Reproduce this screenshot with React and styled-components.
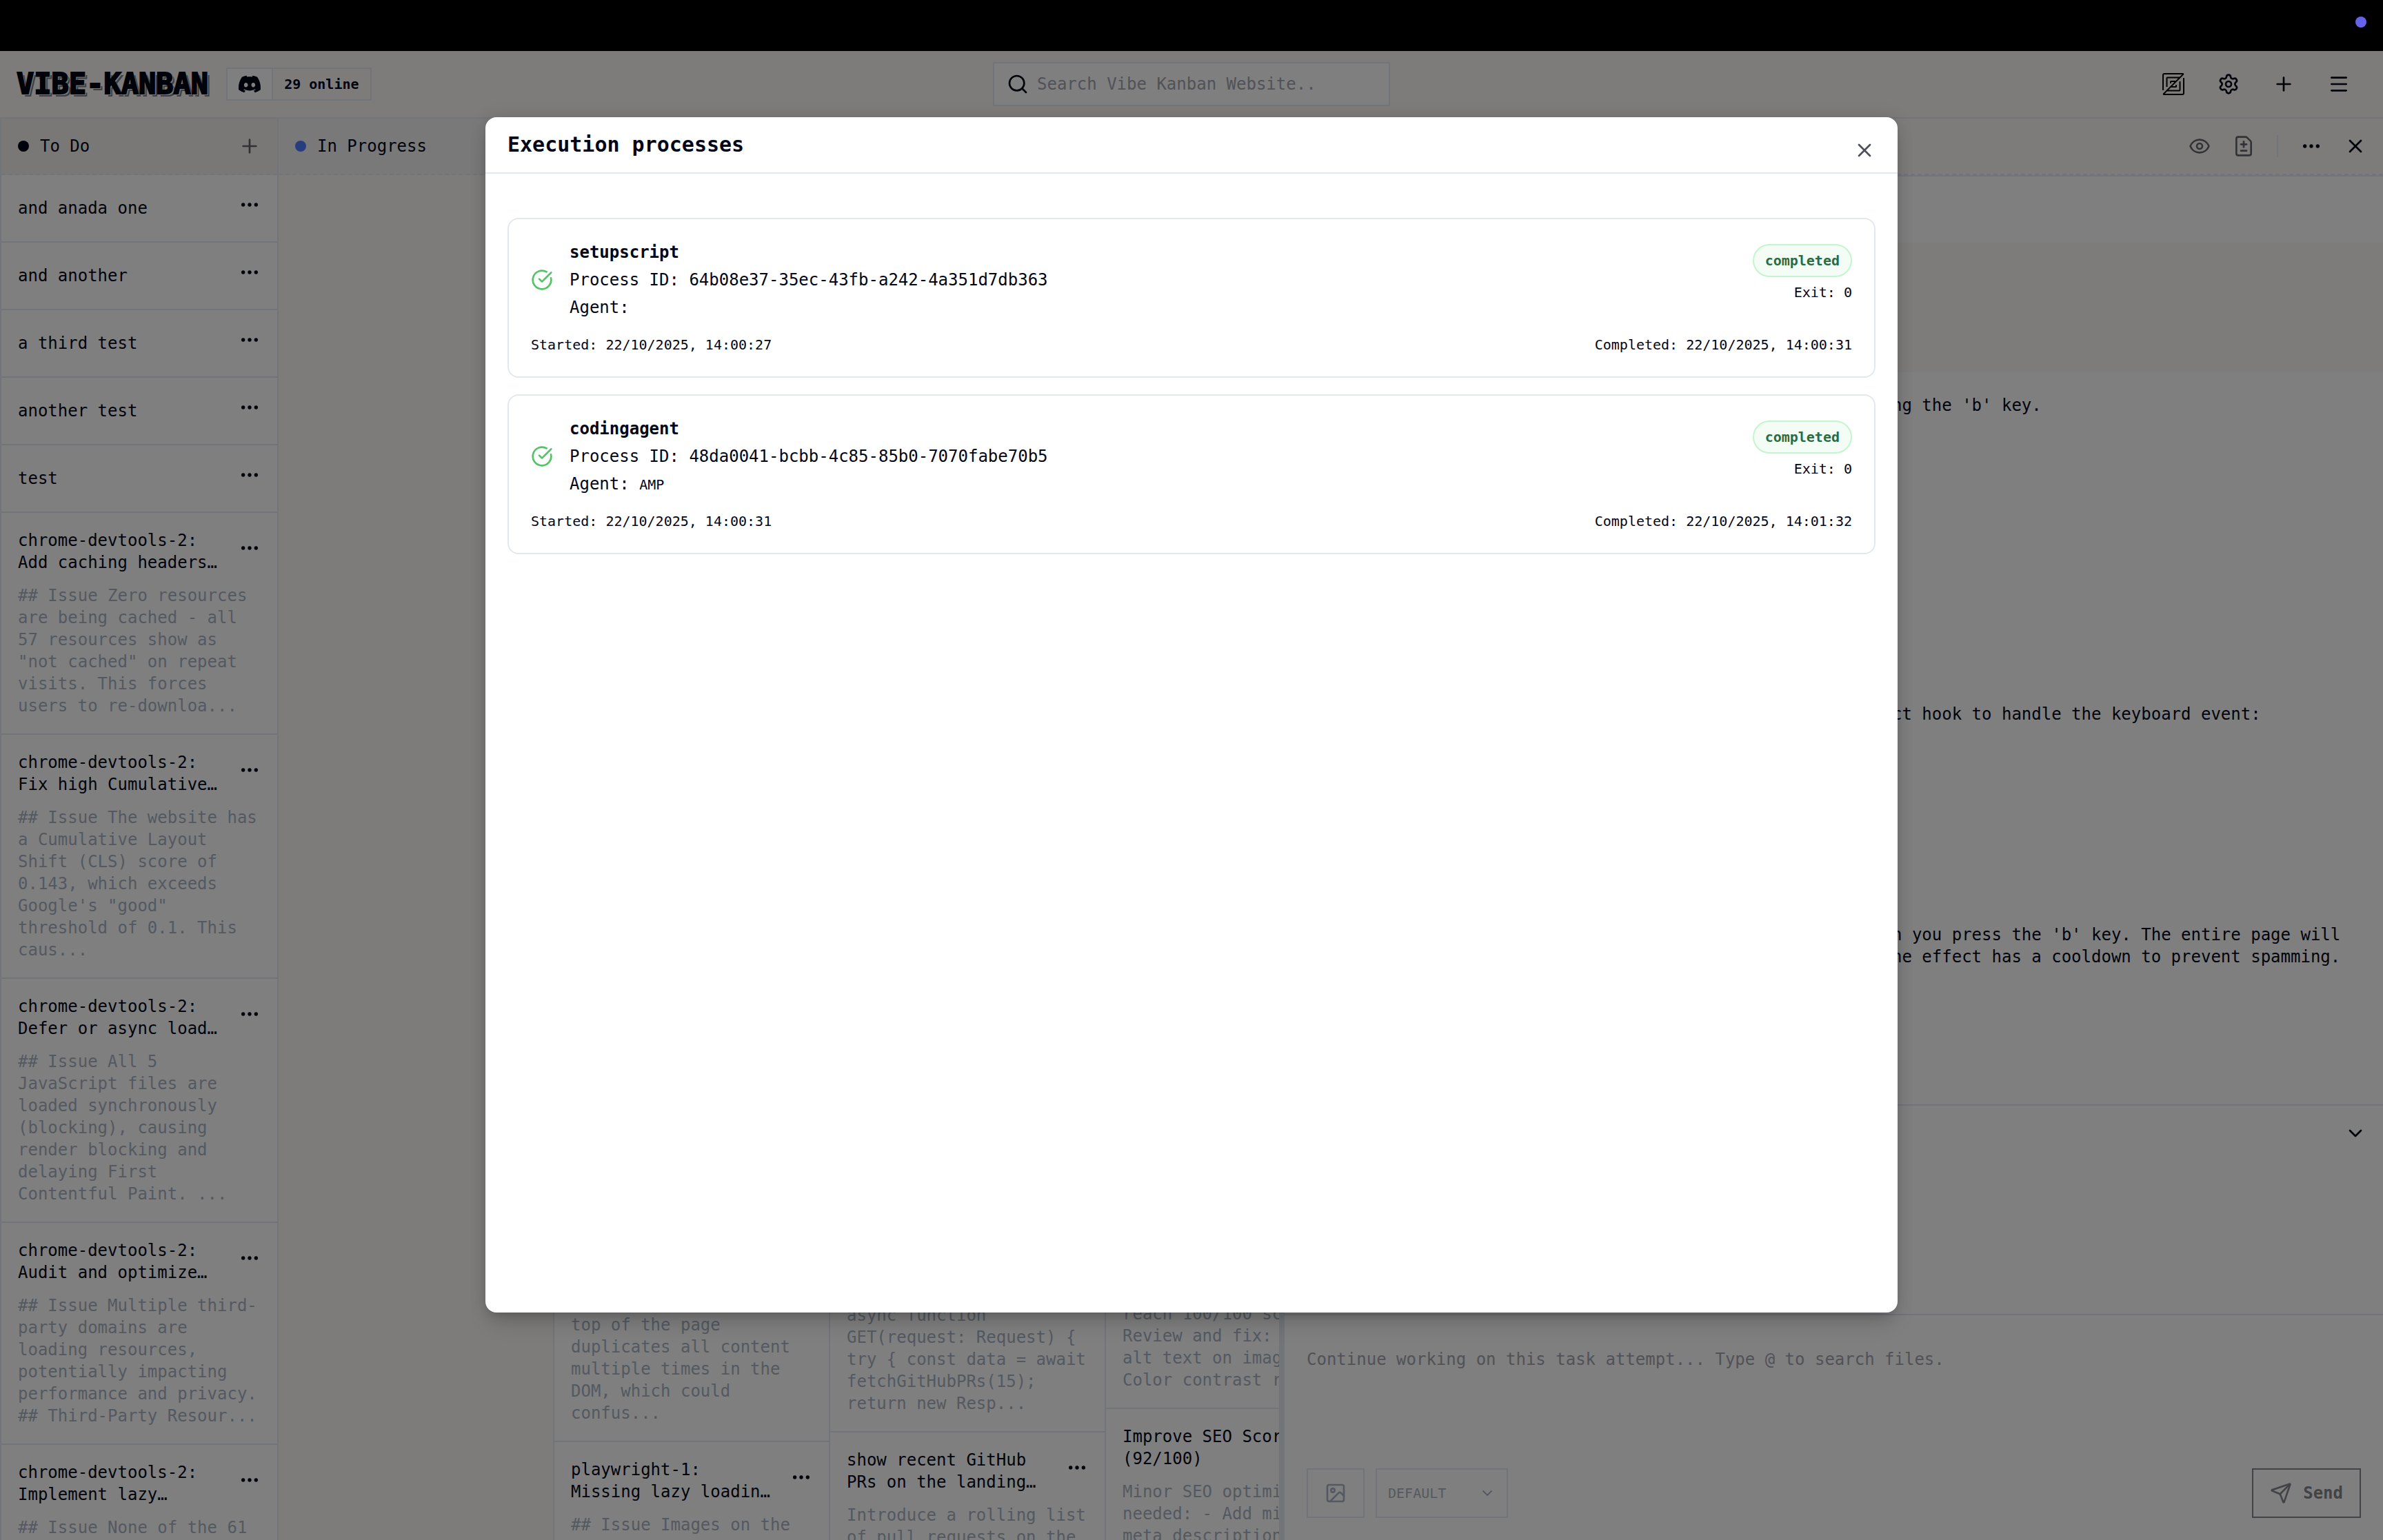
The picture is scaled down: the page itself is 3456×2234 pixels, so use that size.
import React from 'react';
import styled, { createGlobalStyle } from 'styled-components';
import {
  ChevronDown,
  CircleCheckBig,
  Eye,
  FileDiff,
  Image as ImageIcon,
  Menu,
  MoreHorizontal,
  Plus,
  Search,
  Send,
  Settings,
  X,
} from 'lucide-react';
import { SiDiscord } from 'react-icons/si';

const color = {
  ink: '#020617',
  line: '#e2e8f0',
  sand: '#fcf9f4',
  muted: '#a9b3c2',
  hint: '#a3a4b0',
};

const GlobalStyle = createGlobalStyle`
  *, *::before, *::after { box-sizing: border-box; }
  body {
    margin: 0;
    background: #000;
    color: ${color.ink};
    font-family: "DejaVu Sans Mono", "Liberation Mono", monospace;
    font-size: 24px;
    line-height: 32px;
  }
  h1, h2, h3, p, ul { margin: 0; padding: 0; font: inherit; }
  ul { list-style: none; }
  button, input, select, textarea { font: inherit; color: inherit; }
`;

const Page = styled.div`
  display: flex;
  flex-direction: column;
  height: 100vh;
`;

const SystemBar = styled.div`
  display: flex;
  flex: none;
  justify-content: flex-end;
  height: 74px;
  padding: 24px;
  background: #000;
`;

const Dot = styled.span`
  flex: none;
  width: 16px;
  height: 16px;
  border-radius: 50%;
  background: ${(p) => p.$color};
`;

const Shell = styled.div`
  position: relative;
  display: flex;
  flex: 1;
  flex-direction: column;
  min-height: 0;
  background: #fff;
`;

const IconButton = styled.button`
  display: grid;
  flex: none;
  place-items: center;
  width: ${(p) => p.$width || 32}px;
  height: 32px;
  padding: 0;
  border: 0;
  background: none;
  opacity: ${(p) => (p.$faded ? 0.6 : 1)};
`;

/* Top navigation */

const NavBar = styled.header`
  display: grid;
  flex: none;
  grid-template-columns: 1fr auto 1fr;
  align-items: center;
  height: 98px;
  padding: 0 24px;
  border-bottom: 2px solid ${color.line};
  background: ${color.sand};
`;

const Brand = styled.div`
  display: flex;
  align-items: center;
  gap: 26px;
`;

const Wordmark = styled.h1`
  font-size: 42px;
  font-weight: 700;
  line-height: 48px;
  -webkit-text-stroke: 2px ${color.ink};
  text-shadow: 2px 2px 0 ${color.sand}, 4px 4px 0 #7c7d86;
`;

const OnlineLink = styled.a`
  display: flex;
  align-items: center;
  height: 48px;
  border: 2px solid ${color.line};
  color: inherit;
  font-size: 20px;
  font-weight: 700;
  line-height: 28px;
  text-decoration: none;
`;

const OnlineIcon = styled.span`
  display: grid;
  place-items: center;
  width: 66px;
  height: 100%;
  border-right: 2px solid ${color.line};
  background: #fff;
`;

const OnlineText = styled.span`
  padding: 0 16px;
`;

const SearchBox = styled.label`
  display: flex;
  align-items: center;
  gap: 12px;
  width: 576px;
  height: 64px;
  padding: 0 110px 0 18px;
  border: 2px solid ${color.line};
  background: #fff;
`;

const SearchInput = styled.input`
  flex: 1;
  min-width: 0;
  padding: 0;
  border: 0;
  outline: 0;
  background: none;
  &::placeholder { color: ${color.hint}; opacity: 1; }
`;

const NavActions = styled.nav`
  display: flex;
  justify-content: flex-end;
`;

/* Board */

const Workspace = styled.div`
  display: grid;
  flex: 1;
  grid-template-columns: minmax(0, 538fr) 8px minmax(0, 462fr);
  min-height: 0;
`;

const Board = styled.main`
  display: flex;
  overflow: hidden;
  border-left: 2px solid ${color.line};
  background: ${color.sand};
`;

const Column = styled.section`
  display: flex;
  flex: none;
  flex-direction: column;
  width: ${(p) => (p.$first ? 402 : 400)}px;
  border-right: 2px solid ${color.line};
`;

const ColumnHeader = styled.div`
  display: flex;
  flex: none;
  align-items: center;
  gap: 16px;
  height: 82px;
  padding: 0 24px;
  border-bottom: 2px dashed ${color.line};
  background: ${(p) => p.$tint};
`;

const ColumnName = styled.h2`
  flex: 1;
`;

const CardList = styled.ul`
  display: flex;
  flex: 1;
  flex-direction: column;
  min-height: 0;
`;

const Card = styled.li`
  display: flex;
  flex: none;
  flex-direction: column;
  gap: 16px;
  min-height: ${(p) => p.$height || 98}px;
  padding: 24px;
  border-bottom: 2px solid ${color.line};
  background: #fff;
`;

const CardTop = styled.div`
  display: flex;
  align-items: center;
  gap: 16px;
  min-height: 48px;
`;

const CardTitle = styled.h3`
  flex: 1;
`;

const CardMenu = styled(IconButton)`
  margin-bottom: 10px;
`;

const CardText = styled.p`
  color: ${color.muted};
`;

const Resizer = styled.div`
  background: ${color.line};
`;

/* Attempt panel */

const Panel = styled.aside`
  display: flex;
  flex-direction: column;
  min-height: 0;
  background: #fff;
`;

const PanelHeader = styled.div`
  flex: none;
  border-bottom: 2px solid ${color.line};
  background: ${color.sand};
`;

const PanelTools = styled.div`
  display: flex;
  align-items: center;
  justify-content: flex-end;
  gap: 32px;
  height: 82px;
  padding: 0 24px;
  border-bottom: 2px dashed ${color.line};
`;

const ToolDivider = styled.span`
  width: 2px;
  height: 32px;
  background: ${color.line};
`;

const PromptBand = styled.div`
  flex: none;
  height: 188px;
  margin-top: 96px;
  background: ${color.sand};
`;

const Conversation = styled.div`
  display: flex;
  flex: 1;
  flex-direction: column;
  min-height: 0;
  padding: 32px 24px 0 881px;
  overflow: hidden;
`;

const Message = styled.p`
  padding-bottom: ${(p) => p.$after || 0}px;
`;

const TodoSection = styled.div`
  display: flex;
  flex: none;
  align-items: flex-start;
  justify-content: flex-end;
  height: 304px;
  padding: 24px;
  border-top: 2px solid ${color.line};
`;

const FollowUp = styled.form`
  display: flex;
  flex: none;
  flex-direction: column;
  height: 328px;
  padding: 32px;
  border-top: 2px solid ${color.line};
`;

const FollowUpInput = styled.textarea`
  flex: 1;
  padding: 16px 0;
  border: 0;
  outline: 0;
  resize: none;
  background: none;
  &::placeholder { color: ${color.hint}; opacity: 1; }
`;

const FollowUpActions = styled.div`
  display: flex;
  gap: 16px;
`;

const AttachButton = styled.button`
  display: grid;
  place-items: center;
  width: 84px;
  height: 72px;
  padding: 0;
  border: 2px solid ${color.line};
  background: none;
  color: ${color.muted};
`;

const VariantField = styled.label`
  display: grid;
  grid-template-columns: 1fr 24px;
  align-items: center;
  width: 192px;
  height: 72px;
  margin-right: auto;
  padding: 0 16px;
  border: 2px solid ${color.line};
  color: ${color.muted};
`;

const VariantSelect = styled.select`
  appearance: none;
  padding: 0;
  border: 0;
  outline: 0;
  background: none;
  font-size: 20px;
  line-height: 28px;
  opacity: 1;
`;

const SendButton = styled.button`
  display: flex;
  align-items: center;
  gap: 16px;
  height: 72px;
  padding: 0 24px;
  border: 2px solid #85878f;
  background: none;
  color: #85878f;
  font-weight: 700;
`;

/* Dialog */

const Overlay = styled.div`
  position: absolute;
  inset: 0;
  padding: 96px 32px 330px;
  background: rgba(0, 0, 0, 0.5);
`;

const Dialog = styled.div`
  position: relative;
  width: 100%;
  max-width: 2048px;
  height: 100%;
  margin: 0 auto;
  border-radius: 16px;
  background: #fff;
  box-shadow: 0 20px 30px -6px rgba(0, 0, 0, 0.15), 0 8px 12px -8px rgba(0, 0, 0, 0.15), 0 0 24px rgba(0, 0, 0, 0.12);
`;

const DialogTitle = styled.h2`
  height: 82px;
  padding: 24px 32px;
  border-bottom: 2px solid ${color.line};
  font-size: 30px;
  font-weight: 700;
`;

const DialogClose = styled(IconButton)`
  position: absolute;
  top: 32px;
  right: 32px;
  opacity: 0.7;
`;

const ProcessList = styled.ul`
  display: flex;
  flex-direction: column;
  gap: 24px;
  padding: 64px 32px;
`;

const Process = styled.li`
  display: flex;
  flex-direction: column;
  gap: 24px;
  padding: 32px;
  border: 2px solid ${color.line};
  border-radius: 16px;
`;

const ProcessRow = styled.div`
  display: flex;
  justify-content: space-between;
`;

const ProcessInfo = styled.div`
  display: flex;
  align-items: center;
  gap: 24px;
`;

const ProcessLines = styled.div`
  display: flex;
  flex-direction: column;
  gap: 8px;
`;

const ProcessName = styled.h3`
  font-weight: 700;
`;

const ProcessState = styled.div`
  display: flex;
  flex-direction: column;
  align-items: flex-end;
  gap: 8px;
  padding-top: 4px;
`;

const Badge = styled.span`
  padding: 8px 16px;
  border: 2px solid #c3f5cf;
  border-radius: 24px;
  background: #f3fdf6;
  color: #2f6a3d;
  font-size: 20px;
  font-weight: 700;
  line-height: 28px;
`;

const Small = styled.span`
  font-size: 20px;
  line-height: 28px;
`;

const ZedLogo = () => (
  <svg width="32" height="32" viewBox="0 0 24 24" fill="#000" aria-hidden="true">
    <path d="M2.25 1.5a.75.75 0 0 0-.75.75v16.5H0V2.25A2.25 2.25 0 0 1 2.25 0h20.095c1.002 0 1.504 1.212.795 1.92L10.764 14.298h3.486V12.75h1.5v1.922a1.125 1.125 0 0 1-1.125 1.125H9.264l-2.578 2.578h11.689V9h1.5v9.375a1.5 1.5 0 0 1-1.5 1.5H5.185L2.562 22.5H21.75a.75.75 0 0 0 .75-.75V5.25H24v16.5A2.25 2.25 0 0 1 21.75 24H1.655C.653 24 .151 22.788.86 22.08L13.19 9.75H9.75v1.5h-1.5V9.375A1.125 1.125 0 0 1 9.375 8.25h5.314l2.625-2.625H5.625V15h-1.5V5.625a1.5 1.5 0 0 1 1.5-1.5h13.19L21.438 1.5z" />
  </svg>
);

const columns = [
  {
    name: 'To Do',
    dot: color.ink,
    tint: '#f4f1ec',
    canAdd: true,
    cards: [
      { title: 'and anada one' },
      { title: 'and another' },
      { title: 'a third test' },
      { title: 'another test' },
      { title: 'test' },
      {
        title: 'chrome-devtools-2: Add caching headers…',
        text: '## Issue Zero resources are being cached - all 57 resources show as "not cached" on repeat visits. This forces users to re-downloa...',
      },
      {
        title: 'chrome-devtools-2: Fix high Cumulative…',
        text: '## Issue The website has a Cumulative Layout Shift (CLS) score of 0.143, which exceeds Google\'s "good" threshold of 0.1. This caus...',
      },
      {
        title: 'chrome-devtools-2: Defer or async load…',
        text: '## Issue All 5 JavaScript files are loaded synchronously (blocking), causing render blocking and delaying First Contentful Paint. ...',
      },
      {
        title: 'chrome-devtools-2: Audit and optimize…',
        text: '## Issue Multiple third-party domains are loading resources, potentially impacting performance and privacy. ## Third-Party Resour...',
      },
      { title: 'chrome-devtools-2: Implement lazy…', text: '## Issue None of the 61' },
    ],
  },
  { name: 'In Progress', dot: '#4d7dfa', tint: '#f2f3f4', cards: [] },
  {
    cards: [
      { height: 1628 },
      { text: 'top of the page duplicates all content multiple times in the DOM, which could confus...' },
      { title: 'playwright-1: Missing lazy loadin…', text: '## Issue Images on the' },
    ],
  },
  {
    cards: [
      { height: 1614 },
      { text: 'async function GET(request: Request) { try { const data = await fetchGitHubPRs(15); return new Resp...' },
      {
        title: 'show recent GitHub PRs on the landing…',
        text: 'Introduce a rolling list of pull requests on the',
      },
    ],
  },
  {
    cards: [
      { height: 1612 },
      { text: 'reach 100/100 score. Review and fix: - Add alt text on images - Color contrast ratios' },
      {
        title: 'Improve SEO Score (92/100)',
        text: 'Minor SEO optimizations needed: - Add missing meta descriptions',
      },
    ],
  },
];

const processes = [
  {
    name: 'setupscript',
    id: '64b08e37-35ec-43fb-a242-4a351d7db363',
    agent: '',
    started: '22/10/2025, 14:00:27',
    completed: '22/10/2025, 14:00:31',
  },
  {
    name: 'codingagent',
    id: '48da0041-bcbb-4c85-85b0-7070fabe70b5',
    agent: 'AMP',
    started: '22/10/2025, 14:00:31',
    completed: '22/10/2025, 14:01:32',
  },
];

function TaskCard({ title, text, height }) {
  return (
    <Card $height={height}>
      {title && (
        <CardTop>
          <CardTitle>{title}</CardTitle>
          <CardMenu type="button" aria-label="Task actions">
            <MoreHorizontal size={32} />
          </CardMenu>
        </CardTop>
      )}
      {text && <CardText>{text}</CardText>}
    </Card>
  );
}

function BoardColumn({ name, dot, tint, canAdd, cards, first }) {
  return (
    <Column $first={first}>
      <ColumnHeader $tint={tint || color.sand}>
        {name && (
          <>
            <Dot $color={dot} />
            <ColumnName>{name}</ColumnName>
          </>
        )}
        {canAdd && (
          <IconButton type="button" aria-label="Add task" $faded>
            <Plus size={32} />
          </IconButton>
        )}
      </ColumnHeader>
      <CardList>
        {cards.map((card, i) => (
          <TaskCard key={i} {...card} />
        ))}
      </CardList>
    </Column>
  );
}

function ProcessCard({ name, id, agent, started, completed }) {
  return (
    <Process>
      <ProcessRow>
        <ProcessInfo>
          <CircleCheckBig size={32} color="#52c466" />
          <ProcessLines>
            <ProcessName>{name}</ProcessName>
            <p>Process ID: {id}</p>
            <p>
              Agent: <Small>{agent}</Small>
            </p>
          </ProcessLines>
        </ProcessInfo>
        <ProcessState>
          <Badge>completed</Badge>
          <Small>Exit: 0</Small>
        </ProcessState>
      </ProcessRow>
      <ProcessRow>
        <Small>Started: {started}</Small>
        <Small>Completed: {completed}</Small>
      </ProcessRow>
    </Process>
  );
}

export default function App() {
  return (
    <Page>
      <GlobalStyle />
      <SystemBar>
        <Dot $color="#6562ec" />
      </SystemBar>
      <Shell>
        <NavBar>
          <Brand>
            <Wordmark>VIBE-KANBAN</Wordmark>
            <OnlineLink href="#discord">
              <OnlineIcon>
                <SiDiscord size={32} />
              </OnlineIcon>
              <OnlineText>29 online</OnlineText>
            </OnlineLink>
          </Brand>
          <SearchBox>
            <Search size={32} />
            <SearchInput type="text" aria-label="Search" placeholder="Search Vibe Kanban Website..." />
          </SearchBox>
          <NavActions>
            <IconButton type="button" aria-label="Open in editor" $width={80}>
              <ZedLogo />
            </IconButton>
            <IconButton type="button" aria-label="Settings" $width={80}>
              <Settings size={32} />
            </IconButton>
            <IconButton type="button" aria-label="New task" $width={80}>
              <Plus size={32} />
            </IconButton>
            <IconButton type="button" aria-label="Menu" $width={80}>
              <Menu size={32} />
            </IconButton>
          </NavActions>
        </NavBar>

        <Workspace>
          <Board>
            {columns.map((column, i) => (
              <BoardColumn key={i} first={i === 0} {...column} />
            ))}
          </Board>
          <Resizer />
          <Panel>
            <PanelHeader>
              <PanelTools>
                <IconButton type="button" aria-label="Preview" $faded>
                  <Eye size={32} />
                </IconButton>
                <IconButton type="button" aria-label="Diffs" $faded>
                  <FileDiff size={32} />
                </IconButton>
                <ToolDivider />
                <IconButton type="button" aria-label="More">
                  <MoreHorizontal size={32} />
                </IconButton>
                <IconButton type="button" aria-label="Close panel">
                  <X size={32} />
                </IconButton>
              </PanelTools>
            </PanelHeader>
            <PromptBand />
            <Conversation>
              <Message $after={416}>ng the 'b' key.</Message>
              <Message $after={288}>ct hook to handle the keyboard event:</Message>
              <Message>n you press the 'b' key. The entire page will</Message>
              <Message>he effect has a cooldown to prevent spamming.</Message>
            </Conversation>
            <TodoSection>
              <IconButton type="button" aria-label="Expand section">
                <ChevronDown size={32} />
              </IconButton>
            </TodoSection>
            <FollowUp>
              <FollowUpInput
                aria-label="Follow-up message"
                placeholder="Continue working on this task attempt... Type @ to search files."
              />
              <FollowUpActions>
                <AttachButton type="button" aria-label="Attach image">
                  <ImageIcon size={32} />
                </AttachButton>
                <VariantField>
                  <VariantSelect aria-label="Variant" defaultValue="DEFAULT">
                    <option>DEFAULT</option>
                  </VariantSelect>
                  <ChevronDown size={24} />
                </VariantField>
                <SendButton type="button">
                  <Send size={32} />
                  Send
                </SendButton>
              </FollowUpActions>
            </FollowUp>
          </Panel>
        </Workspace>

        <Overlay>
          <Dialog role="dialog" aria-modal="true" aria-labelledby="dialog-title">
            <DialogTitle id="dialog-title">Execution processes</DialogTitle>
            <DialogClose type="button" aria-label="Close dialog">
              <X size={32} />
            </DialogClose>
            <ProcessList>
              {processes.map((process) => (
                <ProcessCard key={process.id} {...process} />
              ))}
            </ProcessList>
          </Dialog>
        </Overlay>
      </Shell>
    </Page>
  );
}
